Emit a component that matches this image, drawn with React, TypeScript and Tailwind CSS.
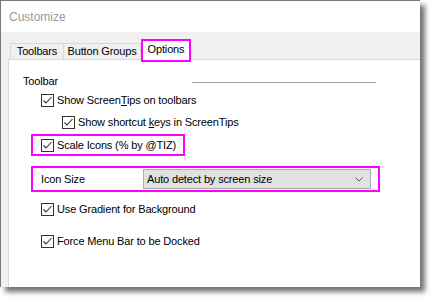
import React from "react";

const font = { fontFamily: '"Liberation Sans", Arial, sans-serif' };

function Check() {
  return (
    <span className="w-[13px] h-[13px] border border-[#333333] bg-white flex items-center justify-center shrink-0">
      <svg width="11" height="11" viewBox="0 0 11 11">
        <polyline points="1.5,5.5 4,8 9.5,2" fill="none" stroke="#333333" strokeWidth="1.1" />
      </svg>
    </span>
  );
}

function CbRow({ label, indent }: { label: React.ReactNode; indent: string }) {
  return (
    <div className={`h-[22px] flex items-center ${indent}`}>
      <Check />
      <span className="ml-[3px] text-[11px] tracking-[-0.15px] text-black leading-none">{label}</span>
    </div>
  );
}

export default function App() {
  return (
    <div className="w-[435px] h-[302px] bg-white overflow-hidden" style={font}>
      <div className="w-[420px] h-[287px] flex flex-col border-t border-l border-[#7a7a7a] shadow-[5px_5px_5px_rgba(0,0,0,0.55)] bg-[#f0f0f0]">
        <div className="h-[31px] bg-white flex items-center pl-[8px] shrink-0">
          <span className="text-[12px] text-[#9a9a9a]">Customize</span>
        </div>
        <div className="flex-1 flex flex-col pl-[7px]">
          <div className="h-[27px] flex items-end pl-[2px] shrink-0">
            <div className="w-[54px] h-[16px] border border-b-0 border-[#d9d9d9] flex items-center justify-center text-[11px] tracking-[-0.15px] text-black">Toolbars</div>
            <div className="w-[77px] h-[16px] border border-b-0 border-l-0 border-[#d9d9d9] flex items-center justify-center text-[11px] tracking-[-0.15px] text-black">Button Groups</div>
            <div className="w-[50px] h-[23px] -mb-[3px] border-2 border-[#ff00ff] flex items-stretch relative z-10">
              <div className="flex-1 bg-white flex items-center justify-center text-[11px] tracking-[-0.15px] text-black pb-[3px]">Options</div>
            </div>
          </div>
          <div className="flex-1 bg-white border-t border-l border-[#d9d9d9] flex flex-col">
            <div className="h-[16px] mt-[13px] flex items-center">
              <span className="w-[183px] pl-[14px] text-[11px] tracking-[-0.15px] text-black">Toolbar</span>
              <div className="w-[184px] h-px bg-[#a0a0a0] mt-[2px]" />
            </div>
            <CbRow indent="pl-[32px]" label={<>Show Screen<u>T</u>ips on toolbars</>} />
            <CbRow indent="pl-[53px]" label={<>Show shortcut <u>k</u>eys in ScreenTips</>} />
            <div className="mt-[1px] ml-[22px] w-[154px] h-[22px] border-2 border-[#ff00ff] flex items-center pl-[8px]">
              <Check />
              <span className="ml-[3px] text-[11px] tracking-[-0.15px] text-black leading-none">Scale Icons (% by @TIZ)</span>
            </div>
            <div className="mt-[10px] ml-[22px] w-[349px] h-[26px] border-2 border-[#ff00ff] flex items-center pl-[8px] pr-[7px]">
              <span className="w-[102px] text-[11px] tracking-[-0.15px] text-black">Icon Size</span>
              <div className="flex-1 h-[20px] bg-[#e1e1e1] border border-[#adadad] flex items-center pl-[3px] pr-[7px]">
                <span className="flex-1 text-[11px] tracking-[-0.15px] text-black">Auto detect by screen size</span>
                <svg width="8" height="5" viewBox="0 0 8 5">
                  <polyline points="0.5,0.5 4,4 7.5,0.5" fill="none" stroke="#555555" strokeWidth="1" />
                </svg>
              </div>
            </div>
            <div className="mt-[6px]">
              <CbRow indent="pl-[32px]" label="Use Gradient for Background" />
            </div>
            <div className="mt-[10px]">
              <CbRow indent="pl-[32px]" label="Force Menu Bar to be Docked" />
            </div>
          </div>
        </div>
      </div>
    </div>
  );
}
